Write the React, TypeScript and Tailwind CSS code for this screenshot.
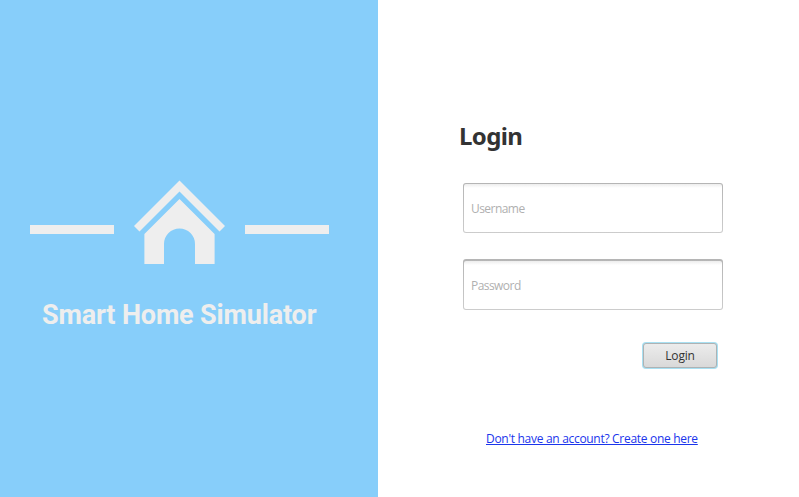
function Bar() {
  return <div className="mt-[45px] h-[9px] w-[84px] bg-[#eeeeee]" />;
}

function House() {
  return (
    <svg width="91" height="84" viewBox="0 0 91 84" fill="#eeeeee">
      <path d="M45.5 .5 91 46l-5.5 5.5-40-40-40 40L0 46Z" />
      <path d="M45.5 19 80.6 54.1V84H61V64A15.5 15.5 0 0 0 30 64V84H10.4V54.1Z" />
    </svg>
  );
}

function Field({ label, type, className }: { label: string; type: string; className: string }) {
  return (
    <div className={`ml-1 w-[260px] rounded-[3px] bg-linear-to-b from-[#b5b5b5] to-[#cccccc] px-px pb-px ${className}`}>
      <input
        type={type}
        placeholder={label}
        className="block h-full w-full rounded-[2px] bg-linear-to-b from-[#ededed] to-white to-[4px] px-[7px] text-[12px] tracking-[-0.55px] outline-none placeholder:text-[#b0b0b0]"
      />
    </div>
  );
}

export default function App() {
  return (
    <main className="flex h-[497px] w-[799px] overflow-hidden bg-white font-['Open_Sans','Noto_Sans',sans-serif]">
      <section className="w-[378px] shrink-0 bg-[#87cefa] pt-[180px] pl-[30px]">
        <div className="flex gap-5">
          <Bar />
          <House />
          <Bar />
        </div>
        <h1 className="mt-[35px] ml-3 font-['Roboto',sans-serif] text-[27px] leading-[33px] font-bold tracking-[-0.16px] whitespace-nowrap text-[#eeeeee]">
          Smart Home Simulator
        </h1>
      </section>
      <section className="w-[421px] pt-[120px] pl-[81px]">
        <h2 className="font-['Noto_Sans',sans-serif] text-[24px] leading-8 font-bold tracking-[-0.6px] text-[#333333]">Login</h2>
        <Field label="Username" type="text" className="mt-[31px] h-[50px] pt-px" />
        <Field label="Password" type="password" className="mt-[26px] h-[51px] pt-[2px]" />
        <button className="mt-[32px] ml-[183px] block h-[27px] w-[76px] rounded-[4px] bg-[#a8e0f2] p-px">
          <span className="block h-[25px] rounded-[3px] border border-[#aeb2b4] bg-linear-to-b from-[#ececec] to-[#d9d9d9] text-[12px] leading-[24px] tracking-[-0.2px] text-[#333333]">
            Login
          </span>
        </button>
        <a className="mt-[61px] ml-[27px] block w-fit text-[12px] leading-[18px] tracking-[-0.3px] whitespace-nowrap text-[#1a35ec] underline underline-offset-1">
          Don't have an account? Create one here
        </a>
      </section>
    </main>
  );
}
